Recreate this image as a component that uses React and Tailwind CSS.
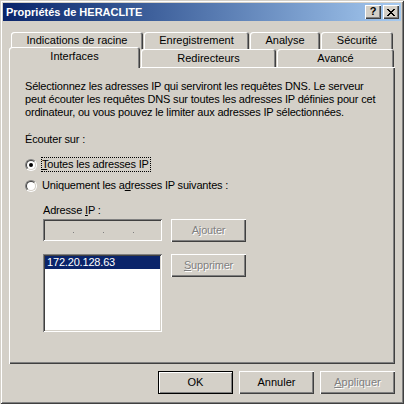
import React from 'react';

const raised = 'shadow-[inset_1px_1px_#fff,inset_-1px_-1px_#404040,inset_-2px_-2px_#808080]';
const sunken = 'shadow-[inset_1px_1px_#808080,inset_-1px_-1px_#fff,inset_2px_2px_#404040,inset_-2px_-2px_#d4d0c8]';
const tabEdge = 'shadow-[inset_1px_1px_#fff,inset_-1px_0_#404040,inset_-2px_0_#808080]';
const disabledText = 'text-[#808080] [text-shadow:1px_1px_0_#fff]';

const Tab = ({ label, className }) => (
	<div className={`flex items-center justify-center bg-[#d4d0c8] rounded-t-[3px] ${tabEdge} ${className}`}>
		{label}
	</div>
);

const Radio = ({ checked }) => (
	<span className="w-3 h-3 rounded-full border border-t-[#808080] border-l-[#808080] border-r-white border-b-white shrink-0">
		<span className="flex items-center justify-center w-full h-full rounded-full bg-white border border-t-[#404040] border-l-[#404040] border-r-[#d4d0c8] border-b-[#d4d0c8]">
			{checked && <span className="w-1 h-1 rounded-full bg-black" />}
		</span>
	</span>
);

const Button = ({ children, disabled, isDefault, className = '' }) => (
	<div
		className={`flex items-center justify-center w-[75px] h-[23px] bg-[#d4d0c8] ${
			isDefault
				? 'border border-black shadow-[inset_1px_1px_#fff,inset_-1px_-1px_#808080]'
				: raised
		} ${disabled ? disabledText : 'text-black'} ${className}`}
	>
		{children}
	</div>
);

export default function App() {
	return (
		<div className="w-[404px] h-[404px] p-[3px] bg-[#d4d0c8] text-[11px] leading-[13px] text-black font-['Liberation_Sans',Arial,sans-serif] shadow-[inset_1px_1px_#d4d0c8,inset_-1px_-1px_#404040,inset_2px_2px_#fff,inset_-2px_-2px_#808080]">
			{/* Title bar */}
			<div className="flex items-center h-[18px] pl-[3px] pr-[2px] bg-linear-to-r from-[#0a246a] to-[#a6caf0]">
				<span className="flex-1 font-bold text-white whitespace-nowrap">Propriétés de HERACLITE</span>
				<div className={`flex items-center justify-center w-4 h-[14px] bg-[#d4d0c8] ${raised} font-bold text-[11px] leading-none pb-px`}>?</div>
				<div className={`flex items-center justify-center w-4 h-[14px] ml-[2px] bg-[#d4d0c8] ${raised}`}>
					<svg width="8" height="7" viewBox="0 0 8 7" shapeRendering="crispEdges">
						<path
							fill="#000"
							d="M0 0h2v1H0z M6 0h2v1H6z M1 1h2v1H1z M5 1h2v1H5z M2 2h4v1H2z M3 3h2v1H3z M2 4h4v1H2z M1 5h2v1H1z M5 5h2v1H5z M0 6h2v1H0z M6 6h2v1H6z"
						/>
					</svg>
				</div>
			</div>

			<div className="px-[6px] mt-[11px]">
				{/* Tabs row 1 */}
				<div className="flex gap-px ml-[2px] h-[17px]">
					<Tab label="Indications de racine" className="w-[132px] h-[17px]" />
					<Tab label="Enregistrement" className="w-[105px] h-[17px]" />
					<Tab label="Analyse" className="w-[70px] h-[17px]" />
					<Tab label="Sécurité" className="w-[72px] h-[17px]" />
				</div>
				{/* Tabs row 2 */}
				<div className="relative z-10 flex items-start h-[21px] -mt-[2px] -mb-px">
					<Tab label="Interfaces" className="w-[131px] h-[21px] pb-[2px]" />
					<Tab label="Redirecteurs" className="w-[135px] h-[18px] mt-[2px] ml-px" />
					<Tab label="Avancé" className="w-[117px] h-[18px] mt-[2px] ml-px" />
				</div>

				{/* Panel */}
				<div className={`h-[297px] pt-[13px] pl-[16px] tracking-[-0.18px] ${raised}`}>
					<div className="whitespace-nowrap">
						<div>Sélectionnez les adresses IP qui serviront les requêtes DNS. Le serveur</div>
						<div>peut écouter les requêtes DNS sur toutes les adresses IP définies pour cet</div>
						<div>ordinateur, ou vous pouvez le limiter aux adresses IP sélectionnées.</div>
					</div>
					<div className="mt-[14px]">Écouter sur :</div>

					<div className="flex items-center h-[15px] mt-[11px]">
						<Radio checked />
						<span className="ml-[4px] border border-dotted border-black h-[15px] pr-px">
							<u>T</u>outes les adresses IP
						</span>
					</div>
					<div className="flex items-center h-[15px] mt-[6px]">
						<Radio />
						<span className="ml-[5px]">
							Uniquement les a<u>d</u>resses IP suivantes :
						</span>
					</div>

					<div className="ml-[18px]">
						<div className="mt-[11px]">
							Adresse <u>I</u>P :
						</div>
						<div className="flex items-start mt-[2px]">
							<div className={`flex items-start gap-[29px] w-[119px] h-[22px] pl-[30px] pt-[13px] bg-[#d4d0c8] ${sunken}`}>
								<span className="w-px h-px bg-[#808080]" />
								<span className="w-px h-px bg-[#808080]" />
								<span className="w-px h-px bg-[#808080]" />
							</div>
							<Button disabled className="ml-[9px]">
								A<u>j</u>outer
							</Button>
						</div>
						<div className="flex items-start mt-[12px]">
							<div className={`w-[119px] h-[78px] p-[2px] bg-white ${sunken}`}>
								<div className="h-[13px] pl-[2px] bg-[#0a246a] text-white">172.20.128.63</div>
							</div>
							<Button disabled className="ml-[9px]">
								<u>S</u>upprimer
							</Button>
						</div>
					</div>
				</div>

				{/* Bottom buttons */}
				<div className="flex justify-end gap-[6px] mt-[7px]">
					<Button isDefault>OK</Button>
					<Button>Annuler</Button>
					<Button disabled>
						<u>A</u>ppliquer
					</Button>
				</div>
			</div>
		</div>
	);
}
